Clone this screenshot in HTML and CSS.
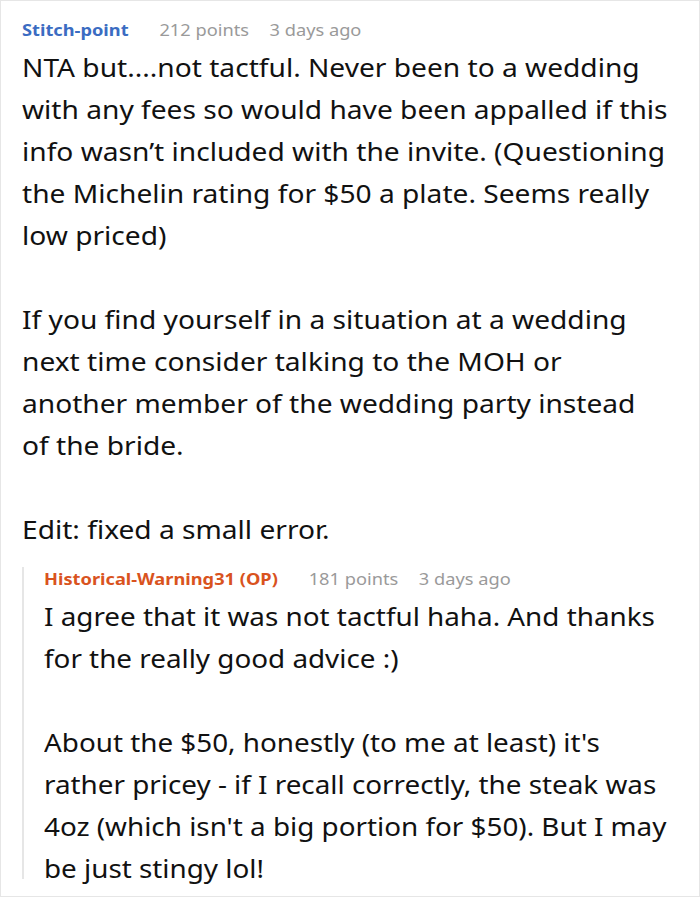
FILE: index.html
```html
<!DOCTYPE html>
<html lang="en">
<head>
<meta charset="utf-8">
<link rel="stylesheet" href="styles.css">
</head>
<body>
<div class="card">
  <div class="comment">
    <div class="meta">
      <span class="author author-blue">Stitch-point</span>
      <span class="points">212 points</span>
      <span class="time">3 days ago</span>
    </div>
    <div class="body body-main">
      <p>NTA but....not tactful. Never been to a wedding<br>with any fees so would have been appalled if this<br>info wasn’t included with the invite. (Questioning<br>the Michelin rating for $50 a plate. Seems really<br>low priced)</p>
      <p>If you find yourself in a situation at a wedding<br>next time consider talking to the MOH or<br>another member of the wedding party instead<br>of the bride.</p>
      <p>Edit: fixed a small error.</p>
    </div>
    <div class="reply">
      <div class="meta">
        <span class="author author-orange">Historical-Warning31 (OP)</span>
        <span class="points">181 points</span>
        <span class="time">3 days ago</span>
      </div>
      <div class="body body-reply">
        <p>I agree that it was not tactful haha. And thanks for the really good advice :)</p>
        <p>About the $50, honestly (to me at least) it's rather pricey - if I recall correctly, the steak was 4oz (which isn't a big portion for $50). But I may be just stingy lol!</p>
      </div>
    </div>
  </div>
</div>
</body>
</html>
```

FILE: styles.css
```css
html, body {
  margin: 0;
  padding: 0;
  background: #ffffff;
}
.card {
  box-sizing: border-box;
  width: 700px;
  height: 897px;
  border: 1px solid #e6e6e6;
  overflow: hidden;
}
.comment {
  padding: 17px 21px 0 21px;
  font-family: "Noto Sans", "Open Sans", sans-serif;
  color: #111111;
}
.meta {
  display: flex;
  align-items: center;
  height: 24px;
  font-size: 16px;
  line-height: 24px;
  white-space: nowrap;
  transform: scaleX(1.14);
  transform-origin: left center;
}
.author {
  font-weight: 700;
  margin-right: 27px;
}
.author-blue { color: #3b6cc2; }
.author-orange { color: #d9531e; }
.points {
  color: #9a9a9a;
  margin-right: 18px;
}
.time { color: #9a9a9a; }
.body {
  margin-top: 4px;
  font-size: 26px;
  line-height: 42px;
  transform-origin: left top;
}
.body-main {
  width: 615px;
  transform: scaleX(1.082);
}
.body-reply {
  width: 592px;
  transform: scaleX(1.07);
}
.body p {
  margin: 0 0 42px 0;
}
.body p:last-child {
  margin-bottom: 0;
}
.reply {
  margin-top: 17px;
  border-left: 2px solid #e6e6e6;
  padding-left: 20px;
  height: 312px;
}
```
